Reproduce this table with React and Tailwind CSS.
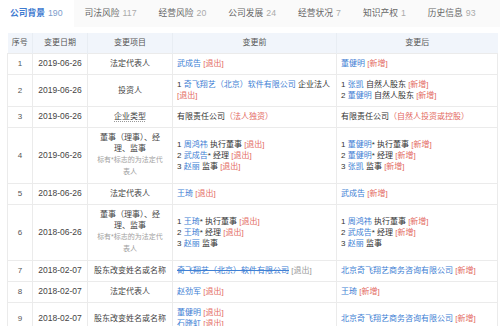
import React from "react";

const B = ({ children }) => <span className="text-[#4080d4]">{children}</span>;
const Out = () => <span className="text-[#e36a62]">[退出]</span>;
const New = () => <span className="text-[#e36a62]">[新增]</span>;

const tabs = [
  ["公司背景", "190", true],
  ["司法风险", "117"],
  ["经营风险", "20"],
  ["公司发展", "24"],
  ["经营状况", "7"],
  ["知识产权", "1"],
  ["历史信息", "93"],
];

const Note = () => (
  <div className="text-[7px] leading-[12px] text-[#a0a0a0]">
    标有*标志的为法定代
    <br />
    表人
  </div>
);

const Duty = () => (
  <div>
    <div>
      董事（理事）、经
      <br />
      理、监事
    </div>
    <Note />
  </div>
);

const rows = [
  {
    n: 1, d: "2019-06-26", item: "法定代表人",
    before: <div><B>武成告</B> <Out /></div>,
    after: <div><B>董健明</B> <New /></div>,
  },
  {
    n: 2, d: "2019-06-26", item: "投资人",
    before: (
      <div>
        <div className="whitespace-nowrap">1 <B>奇飞翔艺（北京）软件有限公司</B> 企业法人</div>
        <div><Out /></div>
      </div>
    ),
    after: (
      <div>
        <div>1 <B>张凯</B> 自然人股东 <New /></div>
        <div>2 <B>董健明</B> 自然人股东 <New /></div>
      </div>
    ),
  },
  {
    n: 3, d: "2019-06-26", item: <span className="underline decoration-dotted decoration-[#999] underline-offset-2">企业类型</span>,
    before: <div>有限责任公司<span className="text-[#e36a62]">（法人独资）</span></div>,
    after: <div>有限责任公司<span className="text-[#e36a62]">（自然人投资或控股）</span></div>,
  },
  {
    n: 4, d: "2019-06-26",
    item: <Duty />,
    before: (
      <div>
        <div>1 <B>周鸿祎</B> 执行董事 <Out /></div>
        <div>2 <B>武成告</B>* 经理 <Out /></div>
        <div>3 <B>赵丽</B> 监事 <Out /></div>
      </div>
    ),
    after: (
      <div>
        <div>1 <B>董健明</B>* 执行董事 <New /></div>
        <div>2 <B>董健明</B>* 经理 <New /></div>
        <div>3 <B>张凯</B> 监事 <New /></div>
      </div>
    ),
  },
  {
    n: 5, d: "2018-06-26", item: "法定代表人",
    before: <div><B>王琦</B> <Out /></div>,
    after: <div><B>武成告</B> <New /></div>,
  },
  {
    n: 6, d: "2018-06-26",
    item: <Duty />,
    before: (
      <div>
        <div>1 <B>王琦</B>* 执行董事 <Out /></div>
        <div>2 <B>王琦</B>* 经理 <Out /></div>
        <div>3 <B>赵丽</B> 监事</div>
      </div>
    ),
    after: (
      <div>
        <div>1 <B>周鸿祎</B> 执行董事 <New /></div>
        <div>2 <B>武成告</B>* 经理 <New /></div>
        <div>3 <B>赵丽</B> 监事</div>
      </div>
    ),
  },
  {
    n: 7, d: "2018-02-07", item: <span className="whitespace-nowrap">股东改变姓名或名称</span>,
    before: <div className="whitespace-nowrap"><span className="text-[#4080d4] line-through">奇飞翔艺（北京）软件有限公司</span> <span className="text-[#999]">[退出]</span></div>,
    after: <div><B>北京奇飞翔艺商务咨询有限公司</B> <New /></div>,
  },
  {
    n: 8, d: "2018-02-07", item: "法定代表人",
    before: <div><B>赵劲军</B> <Out /></div>,
    after: <div><B>王琦</B> <New /></div>,
  },
  {
    n: 9, d: "2018-02-07", item: <span className="whitespace-nowrap">股东改变姓名或名称</span>,
    before: (
      <div>
        <div><B>董健明</B> <Out /></div>
        <div><B>石晓虹</B> <Out /></div>
      </div>
    ),
    after: <div><B>北京奇飞翔艺商务咨询有限公司</B> <New /></div>,
  },
];

export default function App() {
  return (
    <div
      className="w-[500px] h-[326px] overflow-hidden bg-white text-[8px] leading-[11px] text-[#333]"
      style={{ fontFamily: '"Liberation Sans", "Noto Sans CJK SC", sans-serif' }}
    >
      <div className="flex h-[27px] items-center bg-[#fafafa]">
        {tabs.map(([t, c, a], i) => (
          <div
            key={t}
            className={
              "flex h-full items-center whitespace-nowrap text-[8.75px] " +
              (i === 0 ? "pl-[10px] pr-[11px] " : "px-[11px] ") +
              (a ? "bg-white" : "")
            }
          >
            <span className={a ? "font-bold text-[#3f7bd0]" : "text-[#666]"}>{t}</span>
            <span className={"ml-[3px] " + (a ? "text-[#7c9ccb]" : "text-[#aaa]")}>{c}</span>
          </div>
        ))}
      </div>
      <div className="pl-[7px] pt-[6px]">
        <table className="w-[490px] table-fixed border-collapse">
          <colgroup>
            <col className="w-[25px]" />
            <col className="w-[55px]" />
            <col className="w-[85px]" />
            <col className="w-[164px]" />
            <col className="w-[161px]" />
          </colgroup>
          <thead>
            <tr className="h-[20px] bg-[#f1f5fb] text-[#555]">
              <th className="border-r border-[#e8edf3] font-normal">序号</th>
              <th className="border-r border-[#e8edf3] font-normal">变更日期</th>
              <th className="border-r border-[#e8edf3] font-normal">变更项目</th>
              <th className="border-r border-[#e8edf3] font-normal">变更前</th>
              <th className="font-normal">变更后</th>
            </tr>
          </thead>
          <tbody>
            {rows.map((r) => (
              <tr key={r.n}>
                <td className="border border-[#ebebeb] py-[4.5px] text-center text-[#555]">{r.n}</td>
                <td className="border border-[#ebebeb] py-[4.5px] text-center text-[8.5px] text-[#444]">{r.d}</td>
                <td className="border border-[#ebebeb] px-[5px] py-[4.5px] text-center text-[#444]">{r.item}</td>
                <td className="border border-[#ebebeb] px-[4px] py-[4.5px] align-middle">{r.before}</td>
                <td className="border border-[#ebebeb] px-[4px] py-[4.5px] align-middle">{r.after}</td>
              </tr>
            ))}
          </tbody>
        </table>
      </div>
    </div>
  );
}
